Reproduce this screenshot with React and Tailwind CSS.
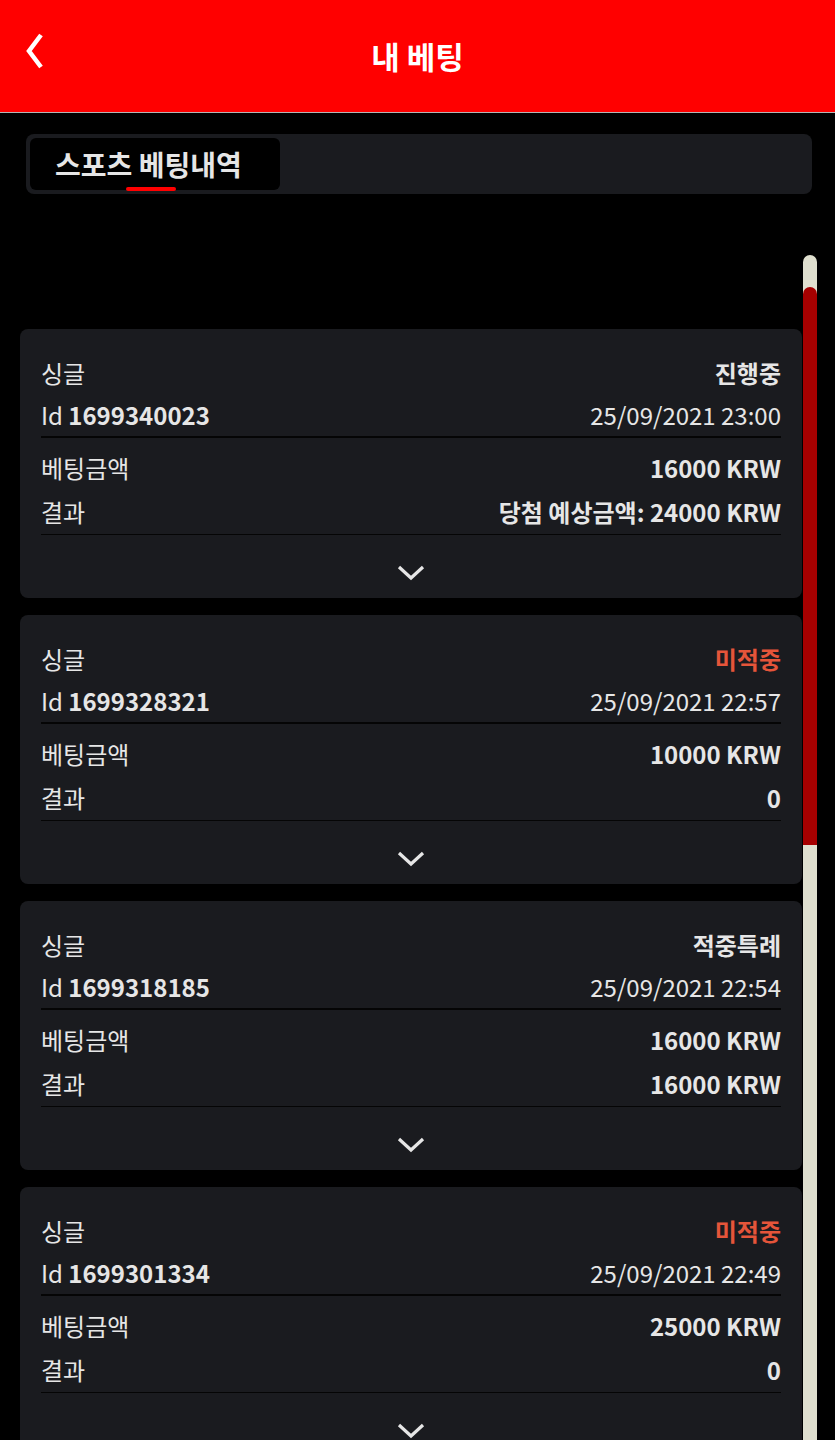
const bets = [
  { id: '1699340023', date: '25/09/2021 23:00', status: '진행중', lost: false, stake: '16000 KRW', result: '당첨 예상금액: 24000 KRW' },
  { id: '1699328321', date: '25/09/2021 22:57', status: '미적중', lost: true, stake: '10000 KRW', result: '0' },
  { id: '1699318185', date: '25/09/2021 22:54', status: '적중특례', lost: false, stake: '16000 KRW', result: '16000 KRW' },
  { id: '1699301334', date: '25/09/2021 22:49', status: '미적중', lost: true, stake: '25000 KRW', result: '0' },
]

function Chevron({ className }) {
  return (
    <svg width="28" height="16" viewBox="0 0 28 16" className={className}>
      <polyline points="2,2 14,13 26,2" fill="none" stroke="currentColor" strokeWidth="3.2" />
    </svg>
  )
}

function BetCard({ bet }) {
  return (
    <article className="h-[269px] shrink-0 overflow-hidden rounded-[8px] bg-[#1a1b1f] px-[21px] pt-[23px] text-[24px] text-[#e6e6e6]">
      <div className="flex h-[42px] items-center justify-between">
        <span>싱글</span>
        <span className={bet.lost ? 'font-bold text-[#e5553a]' : 'font-bold'}>{bet.status}</span>
      </div>
      <div className="flex h-[42px] items-center justify-between">
        <span>
          Id <span className="font-bold">{bet.id}</span>
        </span>
        <span>{bet.date}</span>
      </div>
      <div className="h-[2px] bg-[#050505]" />
      <div className="mt-[8px] flex h-[44px] items-center justify-between">
        <span>베팅금액</span>
        <span className="font-bold">{bet.stake}</span>
      </div>
      <div className="flex h-[44px] items-center justify-between">
        <span>결과</span>
        <span className="font-bold">{bet.result}</span>
      </div>
      <div className="h-[1px] bg-[#050505]" />
      <div className="flex justify-center pt-[30px]">
        <Chevron className="text-[#e6e6e6]" />
      </div>
    </article>
  )
}

export default function App() {
  return (
    <div className="h-[1440px] overflow-hidden bg-black font-['Noto_Sans_CJK_KR',sans-serif]">
      <header className="relative flex h-[113px] items-center justify-center border-b border-[#b5b5b5] bg-[#ff0000]">
        <svg width="20" height="36" viewBox="0 0 20 36" className="absolute left-[25px] top-[33px]">
          <polyline points="16,2 4,18 16,34" fill="none" stroke="white" strokeWidth="4.5" />
        </svg>
        <h1 className="text-[31px] font-bold text-white">내 베팅</h1>
      </header>

      <div className="mx-[23px] ml-[26px] mt-[21px] flex h-[60px] rounded-[8px] bg-[#1a1b1f] p-[4px]">
        <div className="relative flex w-[250px] items-center rounded-[6px] bg-black pl-[25px]">
          <span className="text-[28px] font-bold text-[#e6e6e6]">스포츠 베팅내역</span>
          <span className="absolute bottom-[-1px] left-[96px] h-[4px] w-[50px] rounded-full bg-[#ff0000]" />
        </div>
      </div>

      <div className="mt-[61px] flex">
        <div className="ml-[20px] flex w-[782px] flex-col gap-[17px] pt-[74px]">
          {bets.map((bet) => (
            <BetCard key={bet.id} bet={bet} />
          ))}
        </div>
        <div className="ml-[1px] flex h-[1200px] w-[14px] flex-col rounded-full bg-[#dfdfcf] pt-[32px]">
          <div className="h-[558px] rounded-t-full bg-[#a60000]" />
        </div>
      </div>
    </div>
  )
}
